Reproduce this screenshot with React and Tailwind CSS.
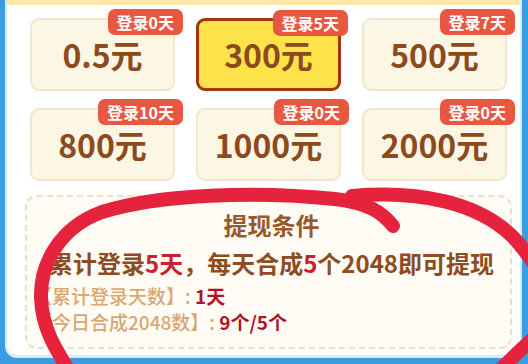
const cards = [
    { amount: "0.5元", days: "登录0天" },
    { amount: "300元", days: "登录5天", active: true },
    { amount: "500元", days: "登录7天" },
    { amount: "800元", days: "登录10天" },
    { amount: "1000元", days: "登录0天" },
    { amount: "2000元", days: "登录0天" }
];

const Card = ({ amount, days, active }) => (
    <div className={`relative h-[73px] flex items-center justify-center rounded-[9px] ${active ? "border-[3px] border-[#a1360f] bg-[#fde24a]" : "border-2 border-[#f1e7cf] bg-[#fcf6e4]"}`}>
        <span className="text-[32px] font-bold leading-none text-[#8c4a1d] -mt-[2px]">{amount}</span>
        <span className="absolute -top-[11px] -right-[10px] h-[26px] px-[9px] rounded-[7px] bg-[#e8573f] text-white text-[16px] font-bold leading-[26px] whitespace-nowrap">{days}</span>
    </div>
);

export default function App() {
    return (
        <div className="relative w-[528px] h-[364px] overflow-hidden bg-[#3b9de1] font-['Noto_Sans_CJK_SC','Noto_Sans',sans-serif]">
            <div className="ml-[5px] mr-[6px] h-[358px] flex flex-col bg-white rounded-b-[12px] border-x-2 border-b-[3px] border-[#d7ecfb]">
                <div className="h-[5px] bg-[#fce6a8]" />

                <div className="grid grid-cols-[145px_145px_145px] gap-x-[21px] gap-y-[17px] pl-[23px] pt-[13px]">
                    {cards.map((c, i) => <Card key={i} {...c} />)}
                </div>

                <div className="ml-[18px] mt-[14px] w-[487px] h-[154px] rounded-[12px] border-2 border-dashed border-[#ecdfc6] bg-[#fffcf6] pl-[6px]">
                    <p className="pt-[13px] text-center text-[24px] font-bold leading-[30px] text-[#98592b]">提现条件</p>
                    <p className="mt-[8px] text-center text-[24px] font-bold leading-[30px] text-[#8e4d20] whitespace-nowrap">
                        累计登录<span className="text-[#cc1f2d]">5天</span>，每天合成<span className="text-[#cc1f2d]">5</span>个2048即可提现
                    </p>
                    <p className="mt-[5px] text-[19px] font-medium leading-[26px] text-[#d9a870]">
                        【累计登录天数】: <span className="font-bold text-[#b3131f]">1天</span>
                    </p>
                    <p className="text-[19px] font-medium leading-[26px] text-[#d9a870]">
                        【今日合成2048数】: <span className="font-bold text-[#b3131f]">9个/5个</span>
                    </p>
                </div>
            </div>

            <svg className="absolute inset-0 pointer-events-none" width="528" height="364" viewBox="0 0 528 364" fill="none" stroke="#e6233d" strokeWidth="14" strokeLinecap="round">
                <path d="M393 226 C382 212 368 203 335 199 C255 191 160 194 102 212 C58 228 40 266 41 298 C42 328 56 350 70 372" />
                <path d="M352 196 C420 190 478 203 512 236 C522 246 530 258 540 272" />
                <path d="M498 372 C512 358 522 348 536 336" />
            </svg>
        </div>
    );
}
